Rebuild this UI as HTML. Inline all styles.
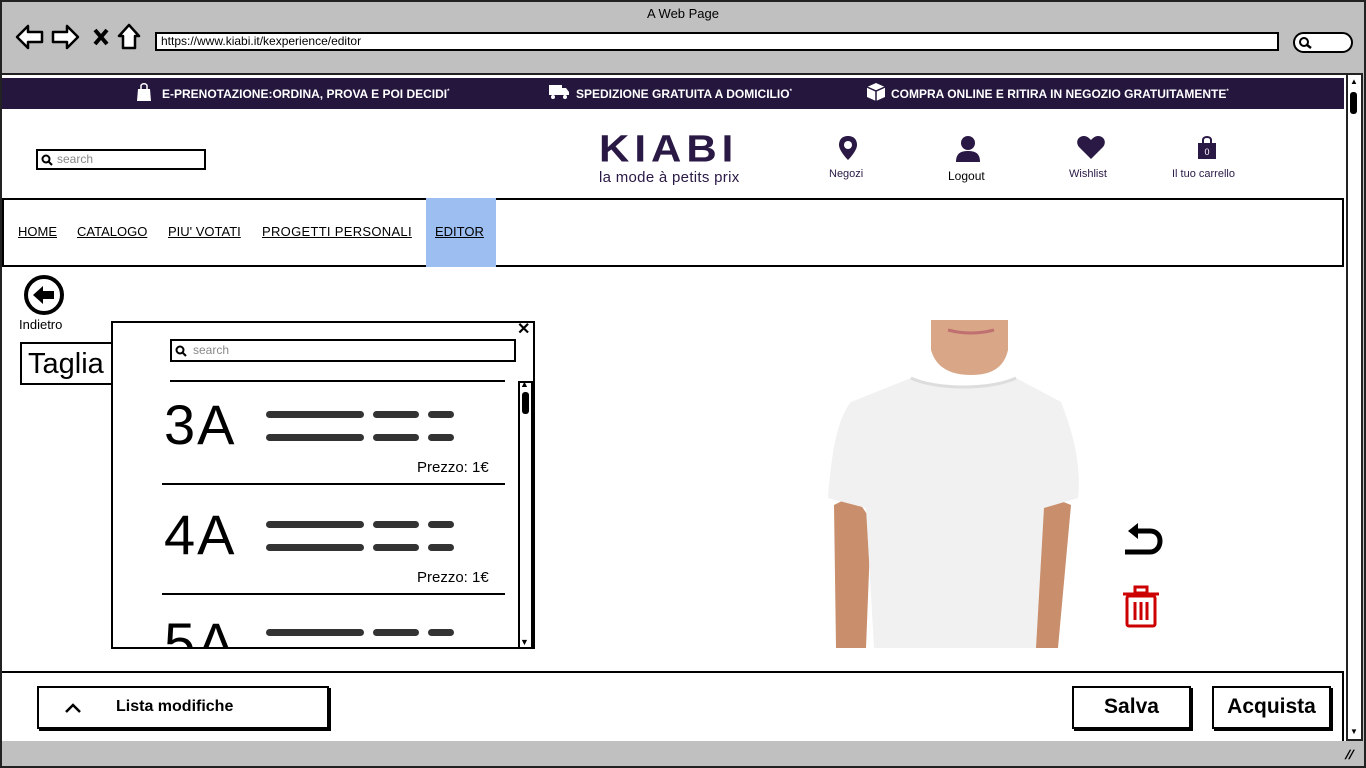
<!DOCTYPE html>
<html><head><meta charset="utf-8"><style>
*{box-sizing:border-box;margin:0;padding:0}
body{width:1366px;height:768px;overflow:hidden;background:#fff;font-family:"Liberation Sans",sans-serif;position:relative;color:#000}
.a{position:absolute}
.box{position:absolute;border:2px solid #000;background:#fff}
.sc{position:absolute;height:7px;background:#333;border-radius:4px}
</style></head><body>
<div class="a" style="left:0;top:0;width:1366px;height:768px;border:2px solid #222;background:#c0c0c0"></div>
<div class="a" style="left:0;top:6px;width:1366px;text-align:center;font-size:13px">A Web Page</div>
<svg class="a" style="left:14px;top:22px" width="130" height="30" viewBox="0 0 130 30">
<path d="M3 15 L14 4 V10 H28 V20 H14 V26 Z" fill="#fff" stroke="#000" stroke-width="2.5" stroke-linejoin="round"/>
<path d="M64 15 L53 4 V10 H39 V20 H53 V26 Z" fill="#fff" stroke="#000" stroke-width="2.5" stroke-linejoin="round"/>
<path d="M81 8 L93 22 M93 8 L81 22" stroke="#000" stroke-width="4"/>
<path d="M115 3 L105 14 H109 V26 H121 V14 H125 Z" fill="#fff" stroke="#000" stroke-width="2.5" stroke-linejoin="round"/>
</svg>
<div class="box" style="left:155px;top:32px;width:1124px;height:19px;font-size:12px;line-height:15px;padding-left:4px">https://www.kiabi.it/kexperience/editor</div>
<div class="box" style="left:1293px;top:32px;width:60px;height:21px;border-radius:11px"></div>
<svg class="a" style="left:1297px;top:36px" width="16" height="14"><circle cx="7" cy="6" r="4" fill="none" stroke="#000" stroke-width="2"/><path d="M10 9 L14 12" stroke="#000" stroke-width="2.5"/></svg>
<div class="a" style="left:2px;top:73px;width:1345px;height:668px;background:#fff;border-top:2px solid #222"></div>
<div class="a" style="left:1346px;top:73px;width:17px;height:668px;background:#fff;border:2px solid #222"></div>
<div class="a" style="left:1350px;top:92px;width:7px;height:22px;background:#000;border-radius:3px"></div>
<div class="a" style="left:1350px;top:77px;font-size:8px">▲</div>
<div class="a" style="left:1350px;top:727px;font-size:8px">▼</div>
<div class="a" style="left:1346px;top:747px;font-size:13px;font-weight:bold;transform:skewX(-20deg)">//</div>
<div class="a" style="left:2px;top:78px;width:1342px;height:31px;background:#24163d;color:#fff;font-size:12px;font-weight:bold;line-height:29px">
<svg class="a" style="left:134px;top:4px" width="16" height="20"><path d="M5 7 V4 C5 1 11 1 11 4 V7" fill="none" stroke="#fff" stroke-width="1.5"/><path d="M2 7 H14 L15 19 H1 Z" fill="#fff"/></svg>
<span class="a" style="left:160px">E-PRENOTAZIONE:ORDINA, PROVA E POI DECIDI<sup style="font-size:6px">*</sup></span>
<svg class="a" style="left:546px;top:6px" width="22" height="16"><rect x="1" y="1" width="13" height="10" fill="#fff"/><path d="M14 4 H18 L21 8 V11 H14 Z" fill="#fff"/><circle cx="5" cy="13" r="2" fill="#fff"/><circle cx="17" cy="13" r="2" fill="#fff"/></svg>
<span class="a" style="left:574px">SPEDIZIONE GRATUITA A DOMICILIO<sup style="font-size:6px">*</sup></span>
<svg class="a" style="left:864px;top:4px" width="20" height="20"><path d="M10 1 L19 5 V15 L10 19 L1 15 V5 Z" fill="#fff"/><path d="M1 5 L10 9 L19 5 M10 9 V19" stroke="#24163d" stroke-width="1.5" fill="none"/></svg>
<span class="a" style="left:889px">COMPRA ONLINE E RITIRA IN NEGOZIO GRATUITAMENTE<sup style="font-size:6px">*</sup></span>
</div>
<div class="box" style="left:36px;top:149px;width:170px;height:21px;font-size:12px;color:#888;line-height:17px;padding-left:19px">search</div>
<svg class="a" style="left:40px;top:153px" width="14" height="14"><circle cx="6" cy="6" r="3.5" fill="none" stroke="#000" stroke-width="2"/><path d="M8 8 L12 12" stroke="#000" stroke-width="2"/></svg>
<div class="a" style="left:599px;top:130px;font-size:42px;font-weight:bold;color:#2a1845;letter-spacing:5px;line-height:42px;transform:scaleY(0.9);transform-origin:top left">KIABI</div>
<div class="a" style="left:599px;top:169px;font-size:15px;color:#2a1845;letter-spacing:0.3px">la mode à petits prix</div>
<svg class="a" style="left:837px;top:134px" width="22" height="28"><path d="M11 2 C4 2 2 7 2 11 C2 17 11 26 11 26 C11 26 20 17 20 11 C20 7 18 2 11 2 Z" fill="#2a1845"/><circle cx="11" cy="11" r="4" fill="#fff"/></svg>
<div class="a" style="left:829px;top:168px;font-size:11px;color:#2a1845">Negozi</div>
<svg class="a" style="left:953px;top:134px" width="30" height="30"><circle cx="15" cy="9" r="7" fill="#2a1845"/><path d="M3 28 C3 19 8 17 15 17 C22 17 27 19 27 28 Z" fill="#2a1845"/></svg>
<div class="a" style="left:948px;top:169px;font-size:12px">Logout</div>
<svg class="a" style="left:1076px;top:134px" width="30" height="26"><path d="M15 25 L3 13 C-1 8 2 2 8 2 C11 2 13 4 15 6 C17 4 19 2 22 2 C28 2 31 8 27 13 Z" fill="#2a1845"/></svg>
<div class="a" style="left:1069px;top:168px;font-size:11px;color:#2a1845">Wishlist</div>
<svg class="a" style="left:1196px;top:134px" width="22" height="26"><path d="M7 9 V6 C7 2 15 2 15 6 V9" fill="none" stroke="#2a1845" stroke-width="2"/><rect x="2" y="9" width="18" height="16" fill="#2a1845"/><text x="11" y="21" fill="#fff" font-size="9" text-anchor="middle" font-family="Liberation Sans">0</text></svg>
<div class="a" style="left:1172px;top:168px;font-size:11px;color:#2a1845">Il tuo carrello</div>
<div class="box" style="left:2px;top:198px;width:1342px;height:69px"></div>
<div class="a" style="left:426px;top:198px;width:70px;height:69px;background:#9cbef0"></div>
<div class="a" style="left:18px;top:224px;font-size:13px;text-decoration:underline">HOME</div>
<div class="a" style="left:77px;top:224px;font-size:13px;text-decoration:underline">CATALOGO</div>
<div class="a" style="left:168px;top:224px;font-size:13px;text-decoration:underline">PIU' VOTATI</div>
<div class="a" style="left:262px;top:224px;font-size:13px;text-decoration:underline;letter-spacing:0.3px">PROGETTI PERSONALI</div>
<div class="a" style="left:435px;top:224px;font-size:13px;text-decoration:underline">EDITOR</div>
<svg class="a" style="left:23px;top:274px" width="42" height="42"><circle cx="21" cy="21" r="18" fill="#fff" stroke="#000" stroke-width="4"/><path d="M10 21 L20 12 V17 H31 V25 H20 V30 Z" fill="#000"/></svg>
<div class="a" style="left:19px;top:317px;font-size:13px">Indietro</div>
<div class="box" style="left:20px;top:342px;width:94px;height:43px;font-size:29px;line-height:40px;padding-left:6px">Taglia</div>
<div class="box" style="left:111px;top:321px;width:424px;height:328px"></div>
<div class="a" style="left:517px;top:319px;font-size:16px;font-weight:bold">✕</div>
<div class="box" style="left:170px;top:339px;width:346px;height:23px;font-size:12px;color:#888;line-height:19px;padding-left:21px">search</div>
<svg class="a" style="left:174px;top:344px" width="14" height="14"><circle cx="6" cy="6" r="3.5" fill="none" stroke="#000" stroke-width="2"/><path d="M8 8 L12 12" stroke="#000" stroke-width="2"/></svg>
<div class="a" style="left:170px;top:380px;width:335px;height:2px;background:#000"></div>
<div class="a" style="left:518px;top:381px;width:15px;height:268px;border:2px solid #000;background:#fff"></div>
<div class="a" style="left:522px;top:392px;width:7px;height:22px;background:#000;border-radius:3px"></div>
<div class="a" style="left:520px;top:379px;font-size:9px">▲</div>
<div class="a" style="left:520px;top:637px;font-size:9px">▼</div>
<div class="a" style="left:112px;top:383px;width:405px;height:264px;overflow:hidden">
 <div class="a" style="left:52px;top:12px;font-size:56px;line-height:60px;letter-spacing:2px">3A</div>
 <div class="sc" style="left:154px;top:28px;width:98px"></div><div class="sc" style="left:261px;top:28px;width:46px"></div><div class="sc" style="left:316px;top:28px;width:26px"></div>
 <div class="sc" style="left:154px;top:51px;width:98px"></div><div class="sc" style="left:261px;top:51px;width:46px"></div><div class="sc" style="left:316px;top:51px;width:26px"></div>
 <div class="a" style="left:305px;top:76px;font-size:15px">Prezzo: 1€</div>
 <div class="a" style="left:50px;top:100px;width:343px;height:2px;background:#000"></div>
 <div class="a" style="left:52px;top:122px;font-size:56px;line-height:60px;letter-spacing:2px">4A</div>
 <div class="sc" style="left:154px;top:138px;width:98px"></div><div class="sc" style="left:261px;top:138px;width:46px"></div><div class="sc" style="left:316px;top:138px;width:26px"></div>
 <div class="sc" style="left:154px;top:161px;width:98px"></div><div class="sc" style="left:261px;top:161px;width:46px"></div><div class="sc" style="left:316px;top:161px;width:26px"></div>
 <div class="a" style="left:305px;top:186px;font-size:15px">Prezzo: 1€</div>
 <div class="a" style="left:50px;top:210px;width:343px;height:2px;background:#000"></div>
 <div class="a" style="left:52px;top:230px;font-size:56px;line-height:60px;letter-spacing:2px">5A</div>
 <div class="sc" style="left:154px;top:246px;width:98px"></div><div class="sc" style="left:261px;top:246px;width:46px"></div><div class="sc" style="left:316px;top:246px;width:26px"></div>
</div>
<svg class="a" style="left:826px;top:320px" width="255" height="330" viewBox="0 0 255 330">
<path d="M105 0 H182 V30 C178 48 165 55 145 55 C125 55 110 48 105 30 Z" fill="#d9a788"/>
<path d="M122 10 Q145 16 168 10" stroke="#c07070" stroke-width="3" fill="none"/>
<path d="M28 175 L8 185 L10 328 H40 L45 200 Z" fill="#c98e6c"/>
<path d="M220 175 L245 185 L232 328 H205 L210 200 Z" fill="#c98e6c"/>
<path d="M85 58 C110 70 165 70 190 58 L235 82 C250 120 255 150 252 178 L218 188 L210 328 H48 L40 188 L2 178 C5 140 10 100 25 82 Z" fill="#f1f1f1"/>
<path d="M85 58 C110 70 165 70 190 58" stroke="#ddd" stroke-width="3" fill="none"/>
</svg>
<svg class="a" style="left:1122px;top:520px" width="42" height="42"><path d="M6 11 L16 3 V19 Z" fill="#000"/><path d="M14 11 H28 C34 11 38 15 38 21 C38 27 34 32 28 32 H3" fill="none" stroke="#000" stroke-width="5"/></svg>
<svg class="a" style="left:1122px;top:585px" width="38" height="44"><rect x="13" y="2" width="12" height="6" fill="none" stroke="#c00" stroke-width="3"/><path d="M1 9 H37" stroke="#c00" stroke-width="3"/><rect x="5" y="11" width="28" height="30" rx="2" fill="none" stroke="#c00" stroke-width="3"/><path d="M13 17 V35 M19 17 V35 M25 17 V35" stroke="#c00" stroke-width="3"/></svg>
<div class="a" style="left:2px;top:671px;width:1342px;height:70px;border-top:2px solid #000;border-right:2px solid #000"></div>
<div class="box" style="left:37px;top:686px;width:292px;height:43px;box-shadow:2px 2px 0 #000"></div>
<svg class="a" style="left:63px;top:700px" width="20" height="16"><path d="M3 12 L10 5 L17 12" fill="none" stroke="#000" stroke-width="2.5"/></svg>
<div class="a" style="left:116px;top:698px;font-size:16px;font-weight:bold">Lista modifiche</div>
<div class="box" style="left:1072px;top:686px;width:119px;height:43px;box-shadow:2px 2px 0 #000;font-size:21px;font-weight:bold;text-align:center;line-height:38px">Salva</div>
<div class="box" style="left:1212px;top:686px;width:119px;height:43px;box-shadow:2px 2px 0 #000;font-size:21px;font-weight:bold;text-align:center;line-height:38px">Acquista</div>
</body></html>
